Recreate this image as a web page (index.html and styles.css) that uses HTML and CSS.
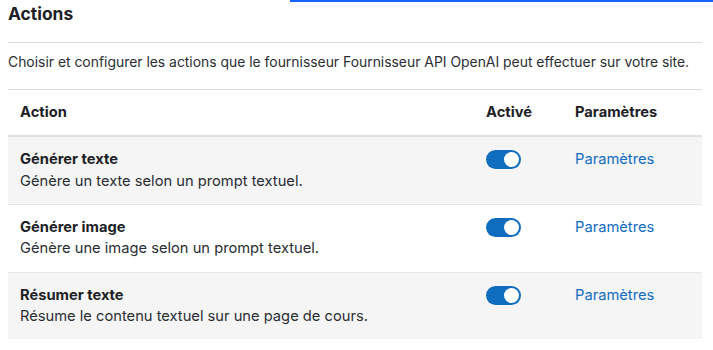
FILE: index.html
```html
<!DOCTYPE html>
<html>
<head>
  <title>Actions</title>
  <link rel="stylesheet" href="styles.css">
</head>
<body>

  <div class="focus-edge"></div>

  <div class="section">
    <h3 class="section-title">Actions</h3>
    <hr>
    <p class="section-intro">Choisir et configurer les actions que le fournisseur Fournisseur API OpenAI peut effectuer sur votre site.</p>
    <hr>

    <table class="actions-table">
      <colgroup>
        <col class="col-action">
        <col class="col-enabled">
        <col class="col-settings">
      </colgroup>
      <thead>
        <tr>
          <th>Action</th>
          <th>Activé</th>
          <th>Paramètres</th>
        </tr>
      </thead>
      <tbody>
        <tr>
          <td>
            <div class="action-name">Générer texte</div>
            <div class="action-desc">Génère un texte selon un prompt textuel.</div>
          </td>
          <td><span class="switch on"><span class="knob"></span></span></td>
          <td><a href="#">Paramètres</a></td>
        </tr>
        <tr>
          <td>
            <div class="action-name">Générer image</div>
            <div class="action-desc">Génère une image selon un prompt textuel.</div>
          </td>
          <td><span class="switch on"><span class="knob"></span></span></td>
          <td><a href="#">Paramètres</a></td>
        </tr>
        <tr>
          <td>
            <div class="action-name">Résumer texte</div>
            <div class="action-desc">Résume le contenu textuel sur une page de cours.</div>
          </td>
          <td><span class="switch on"><span class="knob"></span></span></td>
          <td><a href="#">Paramètres</a></td>
        </tr>
      </tbody>
    </table>
  </div>

</body>
</html>
```

FILE: styles.css
```css
body {
  margin: 0;
  font-family: Inter, "Liberation Sans", sans-serif;
  font-size: 14.7px;
  color: #1d2125;
  background: #ffffff;
}
.focus-edge {
  height: 2px;
  margin-left: 290px;
  background: #1463ff;
}
.section {
  padding: 0 11px 0 8px;
}
.section-title {
  margin: 1px 0 0;
  font-size: 17.4px;
  font-weight: 700;
  line-height: 21.6px;
}
hr {
  margin: 0;
  border: 0;
  border-top: 1px solid #dcdcdc;
}
.section-title + hr {
  margin-top: 17px;
}
.section-intro {
  margin: 8px 0 16px;
  font-size: 13.9px;
  line-height: 22.5px;
  color: #2a2e33;
}
.actions-table {
  width: 100%;
  border-collapse: collapse;
  table-layout: fixed;
}
.col-action { width: 466px; }
.col-enabled { width: 89px; }
.col-settings { width: 139px; }
.actions-table th,
.actions-table td {
  text-align: left;
  vertical-align: top;
  padding: 12px 12px;
  line-height: 21.3px;
}
.actions-table th {
  font-weight: 700;
  border-bottom: 2px solid #dee2e6;
}
.actions-table td {
  border-bottom: 1px solid #e6e6e6;
}
.actions-table tbody tr:nth-child(odd) {
  background: #f5f5f5;
}
.actions-table tbody tr:last-child td {
  border-bottom: 0;
}
.action-name {
  font-weight: 700;
}
.action-desc {
  color: #2a2e33;
}
.actions-table a {
  color: #0f6cbf;
  text-decoration: none;
}
.switch {
  display: block;
  position: relative;
  width: 35px;
  height: 19px;
  margin-top: 1px;
  border-radius: 10px;
  background: #0f6cbf;
}
.switch .knob {
  position: absolute;
  top: 2px;
  right: 2px;
  width: 15px;
  height: 15px;
  border-radius: 50%;
  background: #ffffff;
}
```
